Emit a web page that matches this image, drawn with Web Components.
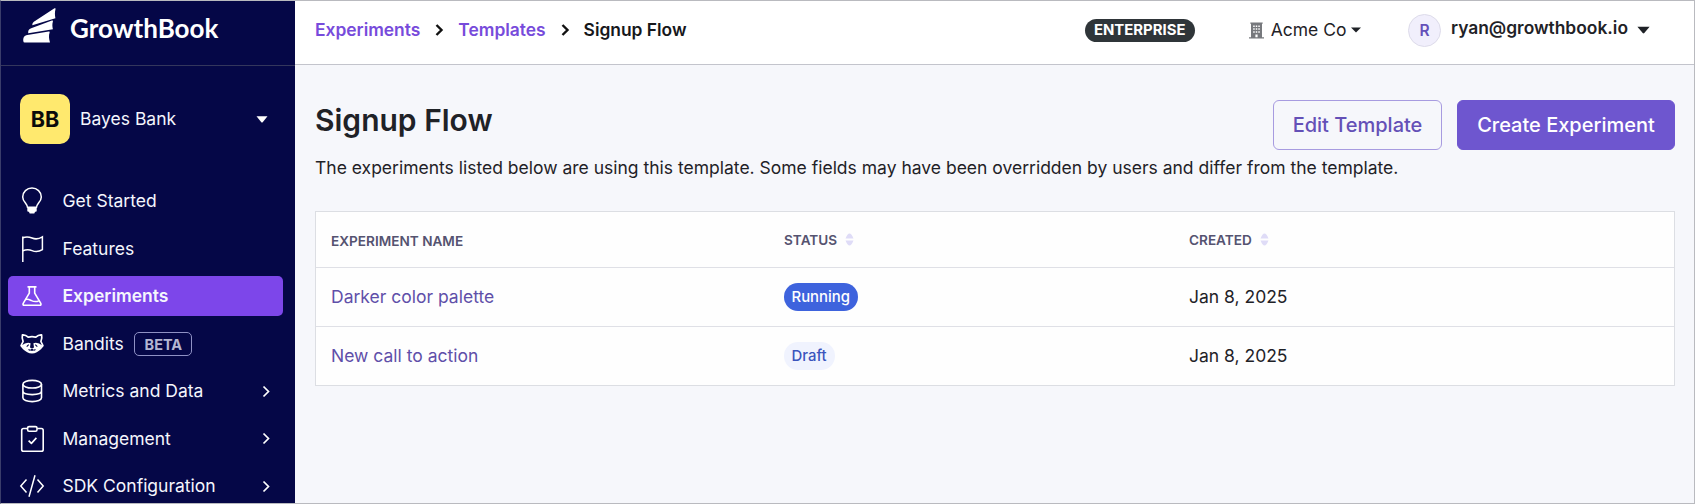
<!DOCTYPE html>
<html lang="en">
<head>
<meta charset="utf-8">
<title>Signup Flow</title>
<style>
html,body{margin:0;height:100%;overflow:hidden;background:#f6f7fb}
body{font-family:Inter,"Liberation Sans",sans-serif;color:#1f2227}
</style>
</head>
<body>
<gb-app></gb-app>
<script>
const define = (name, html) => customElements.define(name, class extends HTMLElement {
  constructor() {
    super();
    const t = document.createElement('template');
    t.innerHTML = typeof html === 'function' ? html(this) : html;
    this.attachShadow({mode: 'open'}).appendChild(t.content.cloneNode(true));
  }
});

const icons = {
  logo: '<svg width="34" height="36" viewBox="0 0 34 36" fill="#fff"><path d="M9.3 18.2C9.2 16 10.300 14.800 12 13.900L31.500 1.200C32.300 1 32.800 1.400 32.500 2.200C31.600 5.500 31.900 8 32.400 11.200Z"/><path d="M5.200 26.200C5 23.500 5.800 22.200 8.200 21.300L28.900 13.600C29.700 13.400 30.100 13.800 29.900 14.600C29.100 17.200 29.300 19.400 29.900 22.300Z"/><path d="M1.600 35.600Q.4 35.600.3 34C.1 30.500 1 28.300 4.400 27.900L25.700 24.400C26.500 24.300 26.900 24.800 26.600 25.600C25.600 28.500 25.900 31.700 27 35.600Z"/></svg>',
  bulb: '<svg width="24" height="28" viewBox="0 0 24 28" fill="none" stroke="#fff" stroke-width="1.500"><path d="M7.400 20.300C7.400 16.500 2.700 14.800 2.700 9.900A9.300 8.900 0 0 1 21.300 9.900C21.300 14.800 16.600 16.500 16.600 20.300Z" stroke-linejoin="round"/><path d="M7.300 20.600h9.400v3.200q0 1-1 1h-.6l-.8 1.600h-4.600l-.8-1.600h-.6q-1 0-1-1Z" fill="#fff" stroke="none"/></svg>',
  flag: '<svg width="24" height="28" viewBox="0 0 24 28" fill="none" stroke="#fff" stroke-width="1.500"><path d="M2.800 1.400V27"/><path d="M2.800 2.700C6 1.500 9 1.700 12 3S19 4 22.400 1.900V14.700C19 16.800 15 17 12 15.600S6 14.400 2.800 15.700"/></svg>',
  flask: '<svg width="24" height="24" viewBox="0 0 24 24" fill="none" stroke="#fff" stroke-width="1.600" stroke-linejoin="round"><path d="M7.500 2.900H16.500M9.300 3v6.200L3.200 19.400Q2.500 21.200 4.200 21.200H19.800Q21.500 21.200 20.800 19.400L14.700 9.200V3"/><path d="M5.600 15.400C8.500 14.700 9.500 15.600 11.500 16.600S15.800 18 18.700 17"/></svg>',
  bandit: '<svg width="24" height="22" viewBox="0 0 24 22"><path d="M2.400 1.900Q5.500 1.600 8.200 4.200Q12 3.200 15.800 4.200Q18.500 1.600 21.600 1.900Q22.300 5 20.900 8.500L22.900 12.600L20.700 15.300Q16.500 19.300 12 19.600Q7.500 19.300 3.300 15.300L1.100 12.600L3.100 8.500Q1.700 5 2.400 1.900Z" fill="none" stroke="#fff" stroke-width="1.700" stroke-linejoin="round"/><path d="M1.500 12.500Q6.500 8.500 10.600 10.200L10 14.500L12 15.500L14 14.500L13.400 10.200Q17.500 8.500 22.500 12.500Q19 18 12 20Q5 18 1.500 12.500Z" fill="#fff"/><path d="M6.700 13.600l2-1.900M17.300 13.600l-2-1.900M8.500 16.500l2 1M15.500 16.500l-2 1" stroke="#050747" stroke-width="1.100"/><ellipse cx="12" cy="16.800" rx="1.500" ry="1.100" fill="#050747"/></svg>',
  db: '<svg width="24" height="26" viewBox="0 0 24 26" fill="none" stroke="#fff" stroke-width="1.600"><ellipse cx="12.200" cy="6.200" rx="9.300" ry="3.800"/><path d="M2.900 6.200V19.800C2.900 22 7 23.600 12.200 23.600S21.500 22 21.500 19.800V6.200M2.900 13C2.900 15.200 7 16.600 12.200 16.600S21.500 15.200 21.500 13"/></svg>',
  clip: '<svg width="24" height="28" viewBox="0 0 24 28" fill="none" stroke="#fff" stroke-width="1.600" stroke-linejoin="round"><path d="M7.300 3.500H3.600Q1.700 3.500 1.700 5.400V24.400Q1.700 26.300 3.600 26.300H21.400Q23.200 26.300 23.200 24.400V5.400Q23.200 3.500 21.400 3.500H17.200"/><rect x="7.600" y="1.600" width="9.400" height="4.600" rx="1.500"/><path d="M8.600 15.600l2.800 2.800 5-5.500"/></svg>',
  code: '<svg width="26" height="24" viewBox="0 0 26 24" fill="none" stroke="#fff" stroke-width="1.500"><path d="M7.500 5.600L1.800 12L7.500 18.400M18.500 5.600L24.200 12L18.500 18.400M16 1.300L10 22.800"/></svg>'
};

define('gb-nav-item', el => `
<style>
:host{display:flex;align-items:center;height:40px;margin:0 12px 7.500px 7px;padding-left:11px;border-radius:5px;color:#f5f6fd;font-size:17.500px;line-height:40px;white-space:nowrap}
:host([active]){background:#7d46ea;font-weight:600}
.i{width:26px;height:30px;margin-right:17.500px;display:flex;align-items:center;justify-content:center}
.i svg{flex:none}
.chev{margin:0 12px 0 auto}
</style>
<span class="i">${icons[el.getAttribute('icon')]}</span><span><slot></slot></span><slot name="tag"></slot>
${el.hasAttribute('more') ? '<svg class="chev" width="9" height="13" viewBox="0 0 9 13" fill="none" stroke="#fff" stroke-width="1.700"><path d="M1.500 1.500L6.500 6.500L1.500 11.500"/></svg>' : ''}`);

define('gb-tag', `
<style>:host{box-sizing:border-box;display:block;width:58px;height:24px;margin-left:10.500px;border:1px solid #8f91c4;border-radius:5px;color:#b4b6d3;font-size:14.500px;font-weight:700;line-height:23px;text-align:center}</style><slot></slot>`);

define('gb-sidebar', `
<style>
:host{display:flex;flex-direction:column;width:294px;flex:none;background:#050747;overflow:hidden}
.brand{box-sizing:border-box;height:65px;border-bottom:1px solid #34365c;padding:6px 0 0 22px;display:flex;flex:none}
.brand svg{flex:none}
.name{font:700 26px/43px Lato,sans-serif;color:#fff;margin-left:13px}
.org{display:flex;align-items:center;height:50px;margin:28px 0 37px 19px;color:#f5f6fd;font-size:17.500px;flex:none}
.av{width:50px;height:50px;border-radius:10px;background:#ffe96e;color:#0b0b0b;font-weight:700;font-size:21.500px;line-height:50px;text-align:center;margin-right:10px}
.on{padding-bottom:2px}
.org svg{margin:0 27px 0 auto}
</style>
<div class="brand">${icons.logo}<span class="name">GrowthBook</span></div>
<div class="org"><span class="av">BB</span><span class="on">Bayes Bank</span><svg width="12" height="7" viewBox="0 0 12 7"><path d="M.5.300H11.500L6.700 6.200Q6 6.800 5.300 6.200Z" fill="#fff"/></svg></div>
<gb-nav-item icon="bulb">Get Started</gb-nav-item>
<gb-nav-item icon="flag">Features</gb-nav-item>
<gb-nav-item icon="flask" active>Experiments</gb-nav-item>
<gb-nav-item icon="bandit">Bandits<gb-tag slot="tag">BETA</gb-tag></gb-nav-item>
<gb-nav-item icon="db" more>Metrics and Data</gb-nav-item>
<gb-nav-item icon="clip" more>Management</gb-nav-item>
<gb-nav-item icon="code" more>SDK Configuration</gb-nav-item>`);

const crumbSep = '<svg width="9" height="14" viewBox="0 0 9 14" fill="none" stroke="#111" stroke-width="2.400"><path d="M1.500 2L6.500 7L1.500 12"/></svg>';
define('gb-topbar', `
<style>
:host{box-sizing:border-box;display:flex;align-items:flex-start;height:64px;background:#fff;border-bottom:1px solid #c3c4cc;padding:9px 44px 0 20px;font-size:17.500px;line-height:40px;white-space:nowrap}
nav{display:flex;align-items:center;font-size:17.400px;font-weight:600;color:#16171b}
nav a{color:#774bdb}
nav svg{margin:0 14px 0 15px}
.right{margin-left:auto;display:flex;align-items:center;height:40px}
.plan{background:#2f3539;color:#fff;font-weight:700;font-size:14.900px;line-height:23px;border-radius:12px;width:110px;text-align:center;margin:1px 54px 0 0}
.co{display:flex;align-items:center;margin-right:46.500px}
.co span{margin:0 5px 0 7px}
.me{box-sizing:border-box;width:33px;height:33px;border:1px solid #dddbea;border-radius:50%;background:#f1effc;color:#6550b9;font-size:15.500px;font-weight:600;line-height:31px;text-align:center;margin-right:10px}
.mail{font-size:17.400px;font-weight:600;margin:0 9px 5px 0}
</style>
<nav><a>Experiments</a>${crumbSep}<a>Templates</a>${crumbSep}<span>Signup Flow</span></nav>
<div class="right"><span class="plan">ENTERPRISE</span>
<span class="co"><svg width="15" height="17" viewBox="0 0 15 17"><path d="M1.300.500H13.700V1.700H13V15.200H15V16.500H0V15.200H2V1.700H1.300Z" fill="#77797d"/><path d="M4.200 3.400h1.500v1.500H4.200ZM6.750 3.400h1.500v1.500h-1.500ZM9.300 3.400h1.500v1.500H9.300ZM4.200 6.300h1.500v1.500H4.200ZM6.750 6.300h1.500v1.500h-1.500ZM9.300 6.300h1.500v1.500H9.300ZM4.200 9.200h1.500v1.500H4.200ZM6.750 9.200h1.500v1.500h-1.500ZM9.300 9.200h1.500v1.500H9.300ZM6.400 12.600h2.200v2.700H6.400Z" fill="#fff"/></svg><span>Acme Co</span><svg width="10" height="6" viewBox="0 0 10 6"><path d="M0 .4H10L5 5.600Z" fill="#1f2227"/></svg></span>
<span class="me">R</span><span class="mail">ryan@growthbook.io</span><svg width="13" height="8" viewBox="0 0 13 8"><path d="M.4.800H12.600L7.300 7Q6.500 7.800 5.700 7Z" fill="#1f2227"/></svg></div>`);

define('gb-button', `
<style>
:host{box-sizing:border-box;display:block;height:50px;border:1px solid #a79be0;border-radius:6px;color:#6450b7;font-size:20px;font-weight:500;line-height:48px;text-align:center;width:169px;white-space:nowrap}
:host([primary]){background:#6e56cf;border-color:#6e56cf;color:#fff;width:218px}
</style><slot></slot>`);

define('gb-pill', `
<style>
:host{display:inline-block;height:28px;line-height:28px;border-radius:14px;padding:0 8px 0 7.500px;font-size:14.900px;font-weight:500;background:#f0f3fe;color:#3b55bd}
:host([solid]){background:#3e63dd;color:#fff}
</style><slot></slot>`);

define('gb-sort', `
<style>:host{display:inline-flex;margin-left:8px}</style>
<svg width="9" height="13" viewBox="0 0 9 13" fill="#dfdcf7"><path d="M.5 5.500Q2.500.500 4.500.500T8.500 5.500Z"/><path d="M.5 7.500H8.500Q6.500 12.500 4.500 12.500T.5 7.500Z"/></svg>`);

define('gb-row', `
<style>
:host{box-sizing:border-box;display:grid;grid-template-columns:453px 405px 1fr;align-items:center;padding-left:15px;height:59px;border-bottom:1px solid #dfe0e6;font-size:17.500px}
:host(:last-child){border-bottom:0;height:58px}
:host([head]){height:56px;font-size:13.600px;font-weight:600;color:#555370}
div{display:flex;align-items:center}
</style>
<div><slot name="name"></slot></div><div><slot name="status"></slot></div><div><slot name="created"></slot></div>`);

define('gb-table', `
<style>
:host{box-sizing:border-box;display:block;margin-top:40px;background:#fefefe;border:1px solid #dcdee3}
a,.d{color:#5f4fa9;padding-bottom:2px}
.d{color:inherit}
.n{padding-top:2px}
.h{display:flex;align-items:center}
</style>
<gb-row head><span class="n" slot="name">EXPERIMENT NAME</span><span class="h" slot="status">STATUS<gb-sort></gb-sort></span><span class="h" slot="created">CREATED<gb-sort></gb-sort></span></gb-row>
<gb-row><a slot="name">Darker color palette</a><gb-pill slot="status" solid>Running</gb-pill><span class="d" slot="created">Jan 8, 2025</span></gb-row>
<gb-row><a slot="name">New call to action</a><gb-pill slot="status">Draft</gb-pill><span class="d" slot="created">Jan 8, 2025</span></gb-row>`);

define('gb-page', `
<style>
:host{display:block;padding:35px 19px 0 20px}
.head{display:flex;gap:15px}
h1{margin:0 auto 0 0;font-size:30px;font-weight:600;line-height:40px}
p{margin:-2px 0 0;font-size:17.500px;line-height:40px;height:23px;white-space:nowrap}
</style>
<div class="head"><h1>Signup Flow</h1><gb-button>Edit Template</gb-button><gb-button primary>Create Experiment</gb-button></div>
<p>The experiments listed below are using this template. Some fields may have been overridden by users and differ from the template.</p>
<gb-table></gb-table>`);

define('gb-app', `
<style>
:host{box-sizing:border-box;display:flex;width:1695px;height:504px;border:1px solid #b9babf;border-left-color:#3a3c6a;background:#f6f7fb}
main{flex:1;min-width:0}
</style>
<gb-sidebar></gb-sidebar><main><gb-topbar></gb-topbar><gb-page></gb-page></main>`);
</script>
</body>
</html>
